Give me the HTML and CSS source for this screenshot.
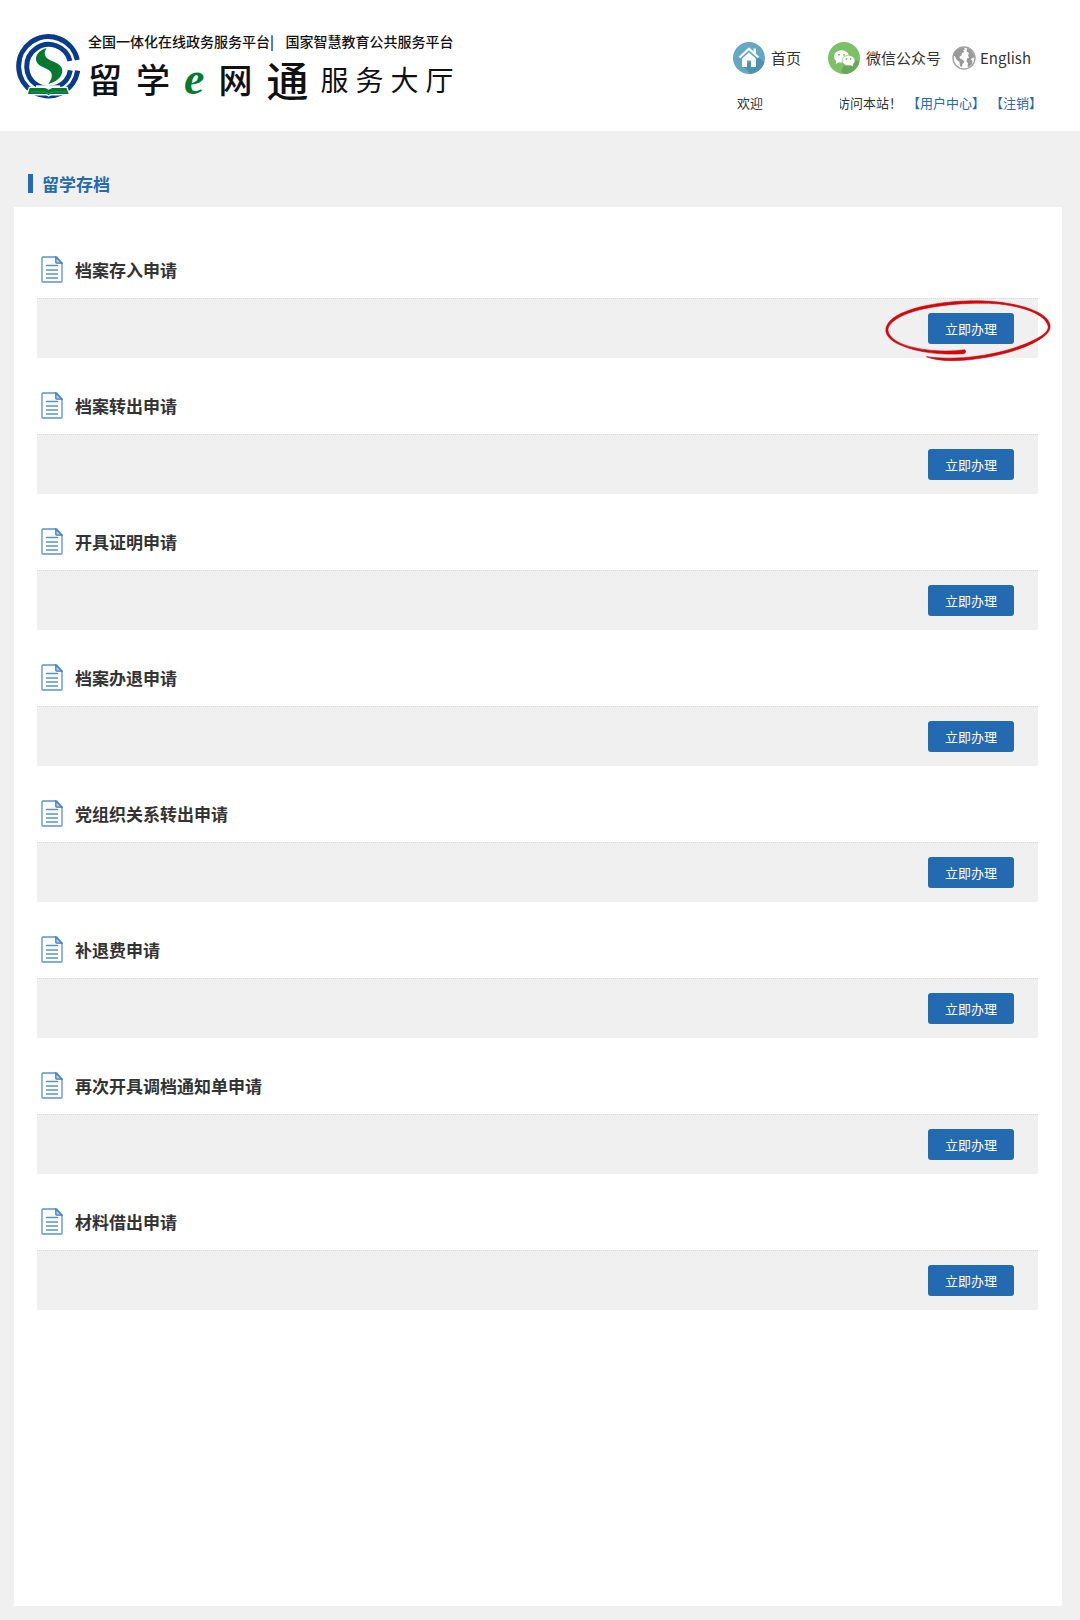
FILE: index.html
```html
<!DOCTYPE html>
<html lang="zh-CN">
<head>
<meta charset="utf-8">
<meta name="viewport" content="width=device-width, initial-scale=1">
<title>留学e网通服务大厅</title>
<link rel="stylesheet" href="styles.css">
</head>
<body>
<svg class="sprite" aria-hidden="true">
  <symbol id="doc" viewBox="0 0 22 27">
    <path d="M2 1h13.500l5.500 6v18a1 1 0 0 1-1 1H2a1 1 0 0 1-1-1V2a1 1 0 0 1 1-1z" fill="#fff" stroke="#5a92c6" stroke-width="1.300"/>
    <path d="M14.800 1v5.200a1 1 0 0 0 1 1H21z" fill="#a9c8e4" stroke="#3f7fba" stroke-width="1.200"/>
    <path d="M5.500 9.500h11M5.500 14h11M5.500 18h11M5.500 22h11" stroke="#5a92c6" stroke-width="1.400" stroke-linecap="round"/>
  </symbol>
</svg>

<header class="site-header">
  <div class="brand">
    <svg class="emblem" viewBox="0 0 192 196" aria-hidden="true">
      <g fill="none" stroke="#083b8c" stroke-width="15">
        <path d="M184 80A89 89 0 1 0 185 112"/>
        <path d="M162 83A66 66 0 1 0 163 111"/>
      </g>
      <path d="M60 156h72v30H60z" fill="#fff"/>
      <path d="M92 44C68 50 56 68 61 84c7 20 42 19 46 38 2 11-3 20-10 30 24-5 43-22 42-41-2-27-43-25-51-43-4-9-1-16 4-24z" fill="#04792f"/>
      <path d="M40 162h48l10 5 10-5h45l8 22H104l-6 4-6-4H33z" fill="#04792f" stroke="#fff" stroke-width="4"/>
      <path d="M44 176h44l10 5 10-5h44" fill="none" stroke="#4f9f6d" stroke-width="2"/>
    </svg>
    <div class="brand-text">
      <p class="tagline"><span>全国一体化在线政务服务平台|</span><span>国家智慧教育公共服务平台</span></p>
      <h1 class="brand-name">
        <span class="brush"><span>留</span><span>学</span><span class="brush-e">e</span><span>网</span><span class="brush-wide">通</span></span>
        <span class="hall"><span>服</span><span>务</span><span>大</span><span>厅</span></span>
      </h1>
    </div>
  </div>

  <div class="tools">
    <nav class="links">
      <a class="link link-home" href="#home">
        <svg class="round-icon" viewBox="0 0 32 32" aria-hidden="true">
          <circle cx="16" cy="16" r="16" fill="#64a9c4"/>
          <path d="M25 15l6.500 5A16 16 0 0 1 17 32l-7-8z" fill="#4d93ae"/>
          <path d="M6.500 15.500L16 6.800l9.500 8.700" fill="none" stroke="#fff" stroke-width="2.200"/>
          <path d="M20.500 6.500H23v6l-2.500-2.300z" fill="#fff"/>
          <path d="M16 10.500l7 6.300V25h-5v-6.500h-4V25H9v-8.200z" fill="#fff"/>
        </svg>
        <span>首页</span>
      </a>
      <a class="link link-wechat" href="#wechat">
        <svg class="round-icon" viewBox="0 0 32 32" aria-hidden="true">
          <circle cx="16" cy="16" r="16" fill="#7cc168"/>
          <path d="M26 17l5.500 3A16 16 0 0 1 16 32l-3-3 4-7z" fill="#69a858"/>
          <ellipse cx="13.500" cy="14.500" rx="7.500" ry="6.200" fill="#fff"/>
          <path d="M8.500 18l-.8 4 4-2z" fill="#fff"/>
          <ellipse cx="20.500" cy="18.500" rx="6.500" ry="5.200" fill="#fff" stroke="#7cc168" stroke-width=".7"/>
          <path d="M22 22.500l3 2-.5-3.500z" fill="#fff"/>
          <g fill="#7cc168"><circle cx="11" cy="12.800" r="1"/><circle cx="16" cy="12.800" r="1"/><circle cx="18.500" cy="17" r=".9"/><circle cx="22.500" cy="17" r=".9"/></g>
        </svg>
        <span>微信公众号</span>
      </a>
      <a class="link link-english" href="#english">
        <svg class="globe" viewBox="0 0 24 24" aria-hidden="true">
          <circle cx="12" cy="12" r="11" fill="#fff" stroke="#a3a3a3" stroke-width="1.400"/>
          <path d="M1.500 10C2.500 5 7 1.500 12 1.500l1 2-2 .5 1.500 2-2.500 1-.5 2.500-2 1 .5 2 3 1.500 1.500 2-2 2-.5 3-2-1-.5-4L4 13l-1-3z" fill="#999"/>
          <path d="M15 2l4 2 3 5 .5 3-1.500-.5-2 1.500 1.500 2.500-.5 2.500-3 3-1.500-.5.500-3-1.500-2.500.5-2.500 2-1-1-2 1-2.500-2.500-1.500z" fill="#999"/>
        </svg>
        <span>English</span>
      </a>
    </nav>
    <p class="welcome">
      <span>欢迎</span><span class="visitor"></span><span class="greeting">访问本站！</span>
      <a href="#user">【用户中心】</a>
      <a href="#logout">【注销】</a>
    </p>
  </div>
</header>

<main class="content">
  <h2 class="section-title">留学存档</h2>
  <div class="panel">
    <section class="service">
      <h3 class="service-name"><svg class="doc" aria-hidden="true"><use href="#doc"/></svg>档案存入申请</h3>
      <div class="service-bar">
        <button class="apply" type="button">立即办理</button>
        <svg class="marker" viewBox="75 54 500 190" aria-hidden="true">
          <path d="M198 228Q245 235 310 231C400 224 480 201 530 174C565 155 570 141 562 128C548 96 475 70 385 67C290 64 160 79 108 114C82 131 76 147 88 163C108 194 180 210 255 211Q290 211 314 207Q320 216 311 219C250 223 175 217 120 193C82 177 68 154 80 132C100 91 205 64 320 60C430 56 535 80 563 116C575 132 574 148 557 163C510 203 410 229 320 238Q240 245 198 228z" fill="#d0080c" stroke="#d0080c" stroke-width="2"/>
        </svg>
      </div>
    </section>
    <section class="service">
      <h3 class="service-name"><svg class="doc" aria-hidden="true"><use href="#doc"/></svg>档案转出申请</h3>
      <div class="service-bar"><button class="apply" type="button">立即办理</button></div>
    </section>
    <section class="service">
      <h3 class="service-name"><svg class="doc" aria-hidden="true"><use href="#doc"/></svg>开具证明申请</h3>
      <div class="service-bar"><button class="apply" type="button">立即办理</button></div>
    </section>
    <section class="service">
      <h3 class="service-name"><svg class="doc" aria-hidden="true"><use href="#doc"/></svg>档案办退申请</h3>
      <div class="service-bar"><button class="apply" type="button">立即办理</button></div>
    </section>
    <section class="service">
      <h3 class="service-name"><svg class="doc" aria-hidden="true"><use href="#doc"/></svg>党组织关系转出申请</h3>
      <div class="service-bar"><button class="apply" type="button">立即办理</button></div>
    </section>
    <section class="service">
      <h3 class="service-name"><svg class="doc" aria-hidden="true"><use href="#doc"/></svg>补退费申请</h3>
      <div class="service-bar"><button class="apply" type="button">立即办理</button></div>
    </section>
    <section class="service">
      <h3 class="service-name"><svg class="doc" aria-hidden="true"><use href="#doc"/></svg>再次开具调档通知单申请</h3>
      <div class="service-bar"><button class="apply" type="button">立即办理</button></div>
    </section>
    <section class="service">
      <h3 class="service-name"><svg class="doc" aria-hidden="true"><use href="#doc"/></svg>材料借出申请</h3>
      <div class="service-bar"><button class="apply" type="button">立即办理</button></div>
    </section>
  </div>
</main>
</body>
</html>
```
FILE: styles.css
```css
* { box-sizing: border-box; }

body {
  margin: 0;
  min-height: 100vh;
  display: flex;
  flex-direction: column;
  background: #f0f0f0;
  color: #333;
  font-family: "Noto Sans CJK SC", sans-serif;
  font-size: 13px;
}

h1, h2, h3, p { margin: 0; }
a { color: inherit; text-decoration: none; }
svg { display: block; flex: none; }
.sprite { position: absolute; width: 0; height: 0; }

/* Header */
.site-header {
  display: flex;
  justify-content: space-between;
  align-items: flex-start;
  padding: 33px 38px 18px 16px;
  background: #fff;
}

.brand { display: flex; gap: 8px; }
.emblem { width: 64px; height: 66px; }
.brand-text { color: #111; }

.tagline {
  display: flex;
  justify-content: space-between;
  font-size: 14px;
  font-weight: 500;
  line-height: 16px;
}

.brand-name {
  display: flex;
  gap: 12px;
  align-items: center;
  line-height: 60px;
}
.brush, .hall { display: flex; align-items: center; }
.brush { gap: 14px; font-size: 34px; font-weight: 500; }
.brush-wide { font-size: 42px; }
.brush-e {
  color: #04792f;
  font-family: "Liberation Serif", serif;
  font-size: 46px;
  font-style: italic;
  font-weight: 700;
}
.hall { gap: 7px; font-size: 28px; font-weight: 400; }

.tools { padding-top: 8px; }
.links {
  display: flex;
  align-items: center;
  padding-right: 11px;
  font-size: 15px;
}
.link { display: flex; align-items: center; line-height: 34px; }
.link-home { gap: 6px; margin-right: 27px; }
.link-wechat { gap: 6px; margin-right: 11px; }
.link-english { gap: 4px; }
.round-icon { width: 32px; height: 32px; }
.globe { width: 24px; height: 24px; }

.welcome {
  display: flex;
  align-items: center;
  gap: 5px;
  padding: 18px 0 0 4px;
  line-height: 20px;
}
.welcome a { color: #236ab0; }
.visitor {
  position: relative;
  flex: 1;
  align-self: stretch;
  margin-right: -8px;
  background: #fff;
}

/* Service list */
.content {
  flex: 1;
  display: flex;
  flex-direction: column;
  padding: 43px 18px 14px 14px;
}

.section-title {
  margin: 0 0 14px 14px;
  padding-left: 9px;
  border-left: 5px solid #236ab0;
  color: #236ab0;
  font-size: 17px;
  line-height: 19px;
}

.panel {
  flex: 1;
  padding: 15px 24px 24px 23px;
  background: #fff;
}

.service-name {
  display: flex;
  align-items: center;
  gap: 12px;
  padding: 34px 0 15px 4px;
  font-size: 17px;
  line-height: 27px;
}
.doc { width: 22px; height: 27px; }

.service-bar {
  position: relative;
  display: flex;
  justify-content: flex-end;
  padding: 14px 24px;
  border-top: 1px dotted #d8d8d8;
  background: #f0f0f0;
}

.apply {
  width: 86px;
  height: 31px;
  padding: 0;
  border: 0;
  border-radius: 3px;
  background: #236ab0;
  color: #fff;
  font-family: inherit;
  font-size: 13px;
}

.marker {
  position: absolute;
  top: 0;
  right: -14px;
  width: 167px;
  height: 63px;
  pointer-events: none;
}
```
